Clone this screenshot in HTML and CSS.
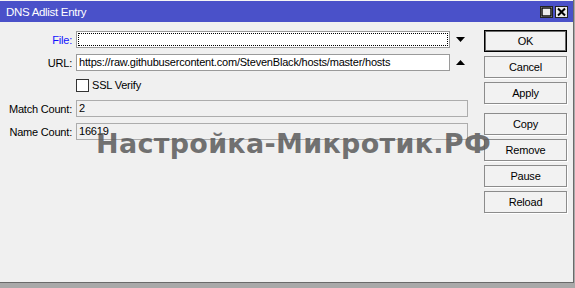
FILE: index.html
```html
<!DOCTYPE html>
<html>
<head>
<meta charset="utf-8">
<link rel="stylesheet" href="styles.css">
</head>
<body>
<div class="window">
  <div class="topline"></div>
  <div class="titlebar">
    <span class="title">DNS Adlist Entry</span>
    <div class="tbtns">
      <span class="tbtn"><svg width="11" height="10" viewBox="0 0 11 10"><rect x="1" y="1" width="9" height="8" fill="none" stroke="#000" stroke-width="1.4"/></svg></span>
      <span class="tbtn"><svg width="11" height="10" viewBox="0 0 11 10"><path d="M2 1.5 L9 8.5 M9 1.5 L2 8.5" stroke="#000" stroke-width="2"/></svg></span>
    </div>
  </div>
  <div class="content">
    <div class="form">
      <div class="row">
        <span class="lbl blue">File:</span>
        <div class="field">
          <div class="input focus"></div>
          <span class="arrow"><svg width="9" height="5" viewBox="0 0 9 5"><path d="M0 0 H9 L4.5 5 Z" fill="#000"/></svg></span>
        </div>
      </div>
      <div class="row">
        <span class="lbl">URL:</span>
        <div class="field">
          <div class="input">https://raw.githubusercontent.com/StevenBlack/hosts/master/hosts</div>
          <span class="arrow"><svg width="9" height="5" viewBox="0 0 9 5"><path d="M0 5 H9 L4.5 0 Z" fill="#000"/></svg></span>
        </div>
      </div>
      <div class="row">
        <span class="lbl"></span>
        <div class="field">
          <span class="checkbox"></span><span class="cblabel">SSL Verify</span>
        </div>
      </div>
      <div class="row">
        <span class="lbl">Match Count:</span>
        <div class="field">
          <div class="input ro wide">2</div>
        </div>
      </div>
      <div class="row">
        <span class="lbl">Name Count:</span>
        <div class="field">
          <div class="input ro wide">16619</div>
        </div>
      </div>
    </div>
    <div class="buttons">
      <div class="btn default">OK</div>
      <div class="btn">Cancel</div>
      <div class="btn">Apply</div>
      <div class="btn sep">Copy</div>
      <div class="btn">Remove</div>
      <div class="btn">Pause</div>
      <div class="btn">Reload</div>
    </div>
    <div class="watermark">Настройка-Микротик.РФ</div>
  </div>
</div>
</body>
</html>
```

FILE: styles.css
```css
html, body {
  margin: 0;
  padding: 0;
}
body {
  background: #a9a9a9;
  width: 575px;
  height: 288px;
  overflow: hidden;
  font-family: "Liberation Sans", Arial, sans-serif;
  font-size: 11px;
  letter-spacing: -0.2px;
  color: #000;
}
.window {
  width: 573px;
  height: 282px;
  background: #f0f0f0;
  border-right: 1px solid #6a6a6a;
  border-bottom: 1px solid #6a6a6a;
  display: flex;
  flex-direction: column;
  position: relative;
}
.topline {
  height: 1px;
  background: #f4f4f4;
}
.titlebar {
  height: 21px;
  background: #4a51c9;
  display: flex;
  align-items: center;
  justify-content: space-between;
  padding: 0 5px 0 6px;
}
.title {
  color: #fff;
  font-size: 11.5px;
  letter-spacing: -0.3px;
}
.tbtns {
  display: flex;
  gap: 2px;
}
.tbtn {
  width: 11px;
  height: 10px;
  border: 1px solid #222;
  background: #ececec;
  display: flex;
}
.content {
  flex: 1;
  display: flex;
  position: relative;
}
.form {
  width: 470px;
  padding-top: 6px;
  display: flex;
  flex-direction: column;
}
.row {
  height: 23px;
  display: flex;
  align-items: center;
}
.lbl {
  width: 72px;
  text-align: right;
  margin-right: 4px;
  white-space: nowrap;
}
.blue {
  color: #1010ff;
}
.field {
  display: flex;
  align-items: center;
  width: 392px;
}
.input {
  box-sizing: border-box;
  width: 374px;
  height: 17px;
  border: 1px solid #9a9a9a;
  background: #fff;
  padding-left: 2px;
  line-height: 15px;
  white-space: nowrap;
  overflow: hidden;
}
.input.focus {
  outline: 1px dotted #000;
  outline-offset: -3px;
}
.input.ro {
  background: #f0f0f0;
  border-color: #acacac;
}
.input.wide {
  width: 392px;
}
.arrow {
  flex: 1;
  display: flex;
  justify-content: center;
  padding-left: 2px;
}
.checkbox {
  box-sizing: border-box;
  width: 13px;
  height: 13px;
  border: 1px solid #333;
  background: #fff;
  margin-right: 3px;
}
.cblabel {
  line-height: 13px;
}
.buttons {
  margin-left: 14px;
  padding-top: 8px;
  width: 83px;
  display: flex;
  flex-direction: column;
  gap: 4px;
}
.btn {
  box-sizing: border-box;
  height: 22px;
  border: 1px solid #8c8c8c;
  background: #f2f2f2;
  box-shadow: 1px 1px 0 #fff;
  text-align: center;
  line-height: 20px;
}
.btn.default {
  border-color: #000;
  box-shadow: inset 0 0 0 1px #6a6a6a;
}
.btn.sep {
  margin-top: 5px;
}
.watermark {
  position: absolute;
  left: 96px;
  top: 108px;
  font-family: "DejaVu Sans", sans-serif;
  font-weight: bold;
  font-size: 27px;
  letter-spacing: 0.3px;
  line-height: 27px;
  color: rgba(90, 90, 90, 0.85);
  white-space: nowrap;
}
```
